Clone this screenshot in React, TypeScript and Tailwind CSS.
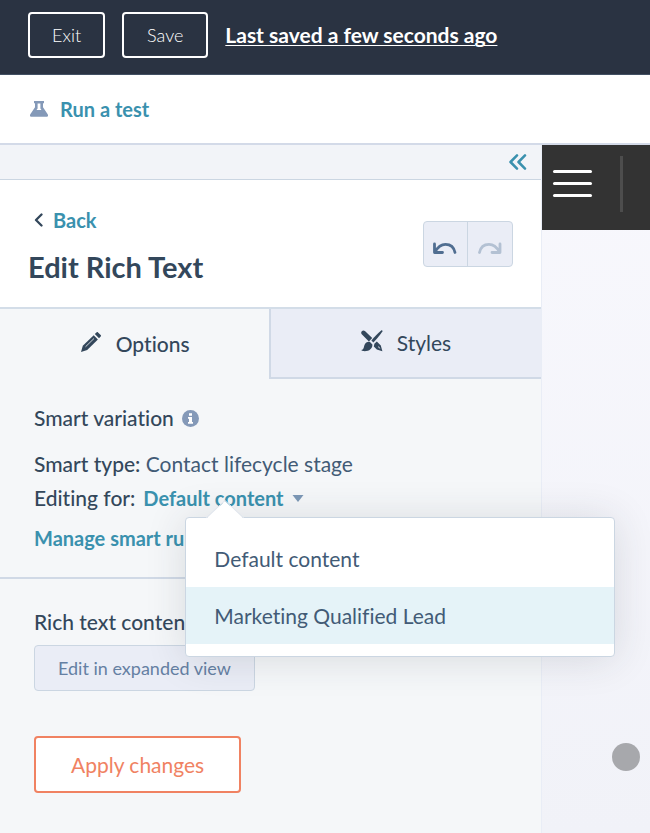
import React from "react";
import { useState } from "react";

const variations = ["Default content", "Marketing Qualified Lead"];

function FlaskIcon() {
    return (
        <svg width="18" height="16" viewBox="0 0 18 16" aria-hidden="true">
            <path fillRule="evenodd" fill="#8499b8" d="M4 0h10v2.200h-1v4l4.700 7c.7 1.400.3 2.600-1.200 2.600h-15c-1.500 0-1.900-1.200-1.200-2.600L5 6.200v-4H4zM7.600 2.400v5L6.500 9h5L10.400 7.400v-5z" />
        </svg>
    )
}

function UndoIcon() {
    return (
        <svg width="26" height="14" viewBox="0 0 26 14" fill="none" stroke="currentColor" strokeWidth="2.800" strokeLinecap="round" strokeLinejoin="round" aria-hidden="true">
            <path d="M2.500 3v8.500H10.500M3 11C6 5.500 9.500 3.300 13.500 3.300c5 0 8.500 3.200 9.500 8.200" />
        </svg>
    )
}

function PencilIcon() {
    return (
        <svg className="mb-1" width="22" height="22" viewBox="0 0 22 22" fill="#33475b" aria-hidden="true">
            <path d="M1 21l1.800-6.200L13.700 4.200l4.200 4.200L7.200 19z" />
            <path d="M14.800 3.100l1.700-1.700c.5-.5 1-.5 1.500 0l2.700 2.700c.5.5.5 1 0 1.500L19 7.300z" />
            <path d="M5.500 15.800L14 7.500" stroke="#f5f7f9" strokeWidth=".8" />
        </svg>
    )
}

function StylesIcon() {
    return (
        <svg className="mb-1" width="22" height="22" viewBox="0 0 22 22" fill="#33475b" aria-hidden="true">
            <path d="M.8 1.200C1.900.2 3.200.4 4.200 1.300l7 6.800-3.300 3.400L1 4.500C0 3.500-.1 2.200.8 1.200z" />
            <path d="M20.200.4c.8-.4 1.600.4 1.200 1.200-2.400 3.600-5.600 7.400-9 10.800l-2-2C13.400 6.800 16.800 3.200 20.200.4z" />
            <path d="M9 12l2.400 2.400c.2 4.200-3.400 7.200-9.100 6.700-.9-.1-1.600-.5-2.100-1 3.300-.5 2.200-3.400 3.800-6 1.200-1.800 3.200-2.600 5-2.100z" />
            <path d="M13.400 13.800l2.400-2.400 4 4 1.600 5.800-5.600-1.800-3-3z" />
            <path d="M17 17l.8-.8 1.800 3z" fill="#eaedf6" />
        </svg>
    )
}

function InfoIcon() {
    return (
        <svg width="17" height="17" viewBox="0 0 17 17" aria-hidden="true">
            <circle cx="8.500" cy="8.500" r="8.500" fill="#8499b8" />
            <path fill="#fff" d="M7 3.200h3v2.500H7zM6 7h4v5h1v1.800H6V12h1V8.700H6z" />
        </svg>
    )
}

function VariationMenu({ onSelect }: { onSelect: (name: string) => void }) {
    return (
        <div role="menu" className="absolute left-[42px] top-9 z-50 w-[430px] rounded border border-[#cbd6e2] bg-white py-3 shadow-[0_2px_40px_rgba(45,50,60,0.14)]">
            <svg className="absolute -top-[18px] left-5" width="38" height="19" viewBox="0 0 38 19" aria-hidden="true">
                <path d="M0 19L19 1l19 18z" fill="#fff" />
                <path d="M0 18L19 .5l19 17.500" fill="none" stroke="#dfe5ee" />
            </svg>
            {
                variations.map((name, i) => {
                    return (
                        <button key={i} role="menuitem" onClick={() => { onSelect(name) }} className={"block w-full px-7 text-left leading-[57px] text-[#425b76] " + (i === 1 ? "bg-[#e5f3f8]" : "bg-white")}>
                            {name}
                        </button>
                    )
                })
            }
        </div>
    )
}

export default function App() {

    const [open, setOpen] = useState(true);
    const [tab, setTab] = useState<"options" | "styles">("options");
    const [variation, setVariation] = useState(variations[0]);

    return (
        <div className="flex min-h-screen flex-col bg-white font-['Lato',sans-serif] text-[21px] text-[#33475b] [font-variant-ligatures:none]">

            <header className="flex items-center gap-[17px] border-b border-[#425063] bg-[#2a3342] px-7 pb-4 pt-3 text-white">
                <button className="h-[46px] rounded border-2 border-white px-[22px] text-lg font-light">Exit</button>
                <button className="h-[46px] rounded border-2 border-white px-[23px] text-lg font-light">Save</button>
                <a href="#history" className="font-bold underline decoration-1 underline-offset-2">Last saved a few seconds ago</a>
            </header>

            <div className="flex h-[70px] shrink-0 items-center border-b-2 border-[#d3dae8] px-[30px]">
                <a href="#test" className="flex items-center gap-3 text-xl font-bold text-[#3a91ae]">
                    <FlaskIcon></FlaskIcon>
                    Run a test
                </a>
            </div>

            <div className="flex grow">
                <aside className="relative z-10 flex w-5/6 flex-col border-r border-[#e9edf6] bg-[#f5f7f9]">
                    <div className="flex h-[35px] items-center justify-end border-b border-[#cbd6e2] bg-[#f2f4f8] pr-[14px]">
                        <button aria-label="Collapse panel">
                            <svg width="18" height="16" viewBox="0 0 18 16" fill="none" stroke="#3a91ae" strokeWidth="2.500" strokeLinecap="round" strokeLinejoin="round" aria-hidden="true">
                                <path d="M8 1.400L1.500 8l6.500 6.600M16 1.400L9.500 8l6.500 6.600" />
                            </svg>
                        </button>
                    </div>

                    <div className="flex items-center justify-between border-b-2 border-[#d3dde8] bg-white px-7 py-[21px]">
                        <div>
                            <a href="#back" className="flex items-center gap-[10px] pl-[6px] text-xl leading-[38px] font-bold text-[#3a91ae]">
                                <svg width="9" height="14" viewBox="0 0 9 14" fill="none" stroke="#33475b" strokeWidth="2.300" strokeLinecap="round" strokeLinejoin="round" aria-hidden="true">
                                    <path d="M7.500 1.500L2 7l5.500 5.500" />
                                </svg>
                                Back
                            </a>
                            <h1 className="pt-2 text-[29px] leading-[39px] font-bold">Edit Rich Text</h1>
                        </div>
                        <div className="flex h-[46px] w-[90px] rounded border border-[#cbd6e2] bg-[#eaedf6]">
                            <button aria-label="Undo" className="flex flex-1 items-center justify-center border-r border-[#cbd6e2] pt-2 text-[#506e91]">
                                <UndoIcon></UndoIcon>
                            </button>
                            <button aria-label="Redo" disabled className="flex flex-1 -scale-x-100 items-center justify-center pt-2 text-[#b3c1d3]">
                                <UndoIcon></UndoIcon>
                            </button>
                        </div>
                    </div>

                    <div role="tablist" className="flex h-[70px]">
                        <button role="tab" aria-selected={tab === "options"} onClick={() => { setTab("options") }} className="flex flex-1 items-center justify-center gap-[14px] font-medium">
                            <PencilIcon></PencilIcon>
                            Options
                        </button>
                        <button role="tab" aria-selected={tab === "styles"} onClick={() => { setTab("styles") }} className="flex flex-1 items-center justify-center gap-[14px] border-b-2 border-l-2 border-[#d0d9e6] bg-[#eaedf6]">
                            <StylesIcon></StylesIcon>
                            Styles
                        </button>
                    </div>

                    <section className="border-b-2 border-[#d0d9e6] px-[34px] pb-[22px] pt-[22px]">
                        <h2 className="flex items-center gap-2 leading-[34px] font-medium">
                            Smart variation
                            <InfoIcon></InfoIcon>
                        </h2>
                        <p className="pt-3 leading-[34px]"><span className="font-medium">Smart type:</span> <span className="text-[#425b76]">Contact lifecycle stage</span></p>
                        <div className="flex gap-2 leading-[34px]">
                            <span className="font-medium">Editing for:</span>
                            <div className="relative">
                                <button aria-haspopup="menu" aria-expanded={open} onClick={() => { setOpen(!open) }} className="flex items-center gap-2 text-xl leading-[34px] font-bold text-[#3a91ae]">
                                    {variation}
                                    <svg width="12" height="7" viewBox="0 0 12 7" aria-hidden="true">
                                        <path d="M.5 0h11L6 7z" fill="#7c98b6" />
                                    </svg>
                                </button>
                                {
                                    open && <VariationMenu onSelect={(name) => { setVariation(name); setOpen(false) }}></VariationMenu>
                                }
                            </div>
                        </div>
                        <a href="#rules" className="mt-[6px] block text-xl leading-[34px] font-bold text-[#3a91ae]">Manage smart rules</a>
                    </section>

                    <section className="flex flex-col items-start px-[34px] pb-10 pt-[26px]">
                        <h2 className="leading-[34px] font-medium">Rich text content</h2>
                        <button className="mt-[6px] h-[46px] rounded border border-[#cbd6e2] bg-[#eaedf6] px-[23px] text-lg text-[#6580a3]">Edit in expanded view</button>
                        <button className="mt-[45px] h-[57px] rounded border-2 border-[#f08262] bg-white px-[35px] text-[#f08262]">Apply changes</button>
                    </section>
                </aside>

                <main className="flex flex-1 flex-col justify-between bg-linear-to-b from-[#f8f8fd] to-[#f1f2f8]">
                    <nav className="flex h-[85px] items-start gap-7 bg-[#333333] pl-[11px] pt-[11px]">
                        <button aria-label="Menu" className="mt-[14px] flex w-[39px] flex-col gap-[9px]">
                            <span className="h-[3px] w-full rounded-full bg-white"></span>
                            <span className="h-[3px] w-full rounded-full bg-white"></span>
                            <span className="h-[3px] w-full rounded-full bg-white"></span>
                        </button>
                        <span className="h-14 w-[3px] bg-[#4d4d4d]"></span>
                    </nav>
                    <span className="mb-[62px] mr-[10px] size-7 self-end rounded-full bg-[#a7a8ac]"></span>
                </main>
            </div>

        </div>
    )
}
